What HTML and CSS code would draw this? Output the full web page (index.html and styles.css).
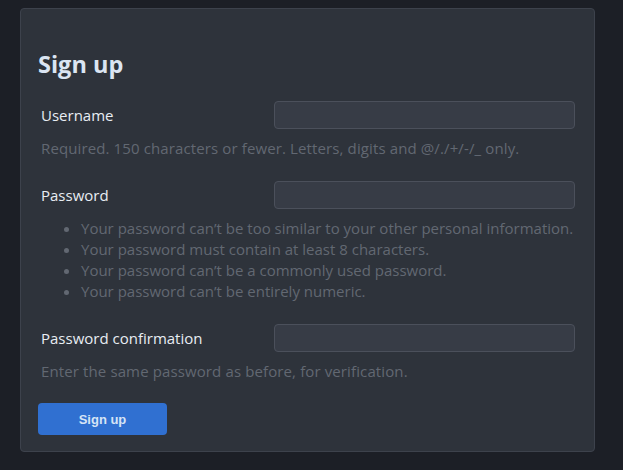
FILE: index.html
```html
<!DOCTYPE html>
<html>
<head>
<meta charset="utf-8">
<link rel="stylesheet" href="styles.css">
</head>
<body>
<div class="card">
  <h1 class="title">Sign up</h1>
  <form class="form">
    <div class="field">
      <div class="row">
        <label class="label">Username</label>
        <input class="input" type="text">
      </div>
      <div class="help">Required. 150 characters or fewer. Letters, digits and @/./+/-/_ only.</div>
    </div>
    <div class="field">
      <div class="row">
        <label class="label">Password</label>
        <input class="input" type="password">
      </div>
      <ul class="help-list">
        <li>Your password can’t be too similar to your other personal information.</li>
        <li>Your password must contain at least 8 characters.</li>
        <li>Your password can’t be a commonly used password.</li>
        <li>Your password can’t be entirely numeric.</li>
      </ul>
    </div>
    <div class="field">
      <div class="row">
        <label class="label">Password confirmation</label>
        <input class="input" type="password">
      </div>
      <div class="help">Enter the same password as before, for verification.</div>
    </div>
    <button class="btn" type="button">Sign up</button>
  </form>
</div>
</body>
</html>
```

FILE: styles.css
```css
html, body {
  margin: 0;
  padding: 0;
  background: #1c1f26;
  height: 100%;
}
body {
  padding: 8px 28px 0 20px;
  box-sizing: border-box;
  font-family: "Open Sans", "Noto Sans", sans-serif;
  font-size: 15px;
  color: #e6ecf2;
}
.card {
  background: #2e333b;
  border: 1px solid #3d424c;
  border-radius: 4px;
  padding: 39px 19px 16px 17px;
}
.title {
  margin: 0 0 21px 0;
  font-size: 23.5px;
  font-weight: 700;
  line-height: 32px;
  color: #dbe5f2;
}
.form {
  display: flex;
  flex-direction: column;
}
.field {
  display: flex;
  flex-direction: column;
  gap: 9px;
  margin-bottom: 22px;
}
.row {
  display: grid;
  grid-template-columns: 233px 1fr;
  align-items: center;
  padding-left: 3px;
}
.label {
  color: #e8edf3;
}
.input {
  height: 28px;
  box-sizing: border-box;
  background: #373c46;
  border: 1px solid #4b505b;
  border-radius: 4px;
  margin: 0;
}
.help {
  color: #626872;
  line-height: 21px;
  padding-left: 3px;
  letter-spacing: 0.12px;
}
.help-list {
  margin: 0;
  padding-left: 43px;
  color: #626872;
  line-height: 21px;
}
.btn {
  align-self: flex-start;
  width: 129px;
  height: 32px;
  background: #3070d1;
  border: none;
  border-radius: 4px;
  color: #d6e4f5;
  font-family: "Liberation Sans", Arial, sans-serif;
  font-weight: 700;
  font-size: 13px;
  margin-top: -1px;
}
```
